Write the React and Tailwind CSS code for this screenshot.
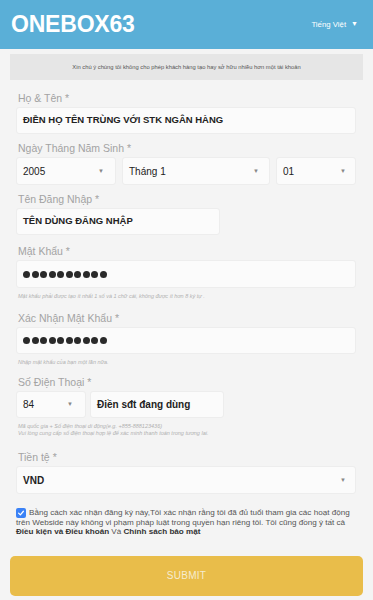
import React from 'react';

const Label = ({ children, className = '' }) => (
  <div className={`text-[10.5px] leading-[14px] text-[#a3a3a3] px-[2px] mb-[2px] ${className}`}>{children}</div>
);

const Box = ({ children, className = '' }) => (
  <div className={`bg-[#fbfbfb] border border-[#ededed] rounded-[3px] flex items-center px-[6px] text-[#222] ${className}`}>
    {children}
  </div>
);

const Hint = ({ children }) => (
  <div className="text-[5.5px] leading-[7px] italic text-[#b0b0b0] px-[2px]">{children}</div>
);

const Dots = () => (
  <div className="flex gap-[1.5px]">
    {Array.from({ length: 10 }).map((_, i) => (
      <span key={i} className="w-[7px] h-[7px] rounded-full bg-[#2a2a2a]" />
    ))}
  </div>
);

export default function App() {
  return (
    <div className="w-[373px] min-h-[600px] bg-[#f4f4f4] font-['Liberation_Sans',Arial,sans-serif]">
      <header className="h-[49px] bg-[#5aafd7] flex items-center px-[11px]">
        <div className="text-white font-bold text-[23px] leading-none tracking-[-0.2px]">ONEBOX63</div>
        <div className="ml-auto flex items-center gap-[5px] text-white text-[7.8px] pr-[4px]">
          <span>Tiếng Việt</span>
          <span className="text-[7px]">▼</span>
        </div>
      </header>

      <div className="mx-[10px] mt-[5px] h-[26px] bg-[#e6e6e6] flex items-center justify-center text-[5.8px] text-[#555]">
        Xin chú ý chúng tôi không cho phép khách hàng tạo hay sở hữu nhiều hơn một tài khoản
      </div>

      <div className="px-[16px] pr-[17px]">
        <Label className="mt-[11px]">Họ &amp; Tên *</Label>
        <Box className="h-[27px] text-[9.5px] font-semibold">ĐIỀN HỌ TÊN TRÙNG VỚI STK NGÂN HÀNG</Box>

        <Label className="mt-[7px]">Ngày Tháng Năm Sinh *</Label>
        <div className="flex gap-[6px] mt-[1px]">
          <Box className="h-[28px] w-[100px] text-[10px] font-medium">2005<span className="mr-[5px] ml-auto text-[6px] text-[#888]">▼</span></Box>
          <Box className="h-[28px] w-[148px] text-[10px] font-medium">Tháng 1<span className="mr-[4px] ml-auto text-[6px] text-[#888]">▼</span></Box>
          <Box className="h-[28px] flex-1 text-[10px] font-medium">01<span className="mr-[3px] ml-auto text-[6px] text-[#888]">▼</span></Box>
        </div>

        <Label className="mt-[7px]">Tên Đăng Nhập *</Label>
        <Box className="h-[27px] w-[204px] text-[9.5px] font-semibold">TÊN DÙNG ĐĂNG NHẬP</Box>

        <Label className="mt-[9px]">Mật Khẩu *</Label>
        <Box className="h-[28px]"><Dots /></Box>
        <div className="mt-[5px]"><Hint>Mật khẩu phải được tạo ít nhất 1 số và 1 chữ cái, không được ít hơn 8 ký tự .</Hint></div>

        <Label className="mt-[11px]">Xác Nhận Mật Khẩu *</Label>
        <Box className="h-[27px]"><Dots /></Box>
        <div className="mt-[5px]"><Hint>Nhập mật khẩu của bạn một lần nữa.</Hint></div>

        <Label className="mt-[9px]">Số Điện Thoại *</Label>
        <div className="flex gap-[4px]">
          <Box className="h-[27px] w-[70px] text-[10px] font-medium">84<span className="mr-[6px] ml-auto text-[6px] text-[#888]">▼</span></Box>
          <Box className="h-[27px] w-[134px] text-[10px] font-semibold">Điền sđt đang dùng</Box>
        </div>
        <div className="mt-[5px]">
          <Hint>Mã quốc gia + Số điện thoại di động(e.g. +855-888123436)</Hint>
          <Hint>Vui lòng cung cấp số điện thoại hợp lệ để xác minh thanh toán trong tương lai.</Hint>
        </div>

        <Label className="mt-[13px]">Tiền tệ *</Label>
        <Box className="h-[28px] text-[10px] font-semibold">VND<span className="mr-[3px] ml-auto text-[6px] text-[#888]">▼</span></Box>

        <div className="mt-[14px] text-[8.1px] leading-[9.3px] text-[#555] whitespace-nowrap">
          <div className="flex items-center">
            <span className="inline-flex w-[10px] h-[10px] rounded-[2px] bg-[#3b82f6] items-center justify-center mr-[3px] shrink-0">
              <svg viewBox="0 0 10 10" className="w-[8px] h-[8px]">
                <path d="M2 5.2 L4.2 7.3 L8 2.8" stroke="white" strokeWidth="1.6" fill="none" strokeLinecap="round" strokeLinejoin="round" />
              </svg>
            </span>
            <span>Bằng cách xác nhận đăng ký này,Tôi xác nhận rằng tôi đã đủ tuổi tham gia các hoạt động</span>
          </div>
          <div>trên Webside này không vi phạm pháp luật trong quyền hạn riêng tôi. Tôi cũng đồng ý tất cả</div>
          <div>
            <b className="text-[#333]">Điều kiện và Điều khoản</b> Và <b className="text-[#333]">Chính sách bảo mật</b>
          </div>
        </div>
      </div>

      <div className="mx-[10px] mt-[19px] h-[40px] rounded-[5px] bg-[#e9bd4a] flex items-center justify-center text-[#f6ecd0] text-[10px] tracking-[0.3px]">
        SUBMIT
      </div>
    </div>
  );
}
